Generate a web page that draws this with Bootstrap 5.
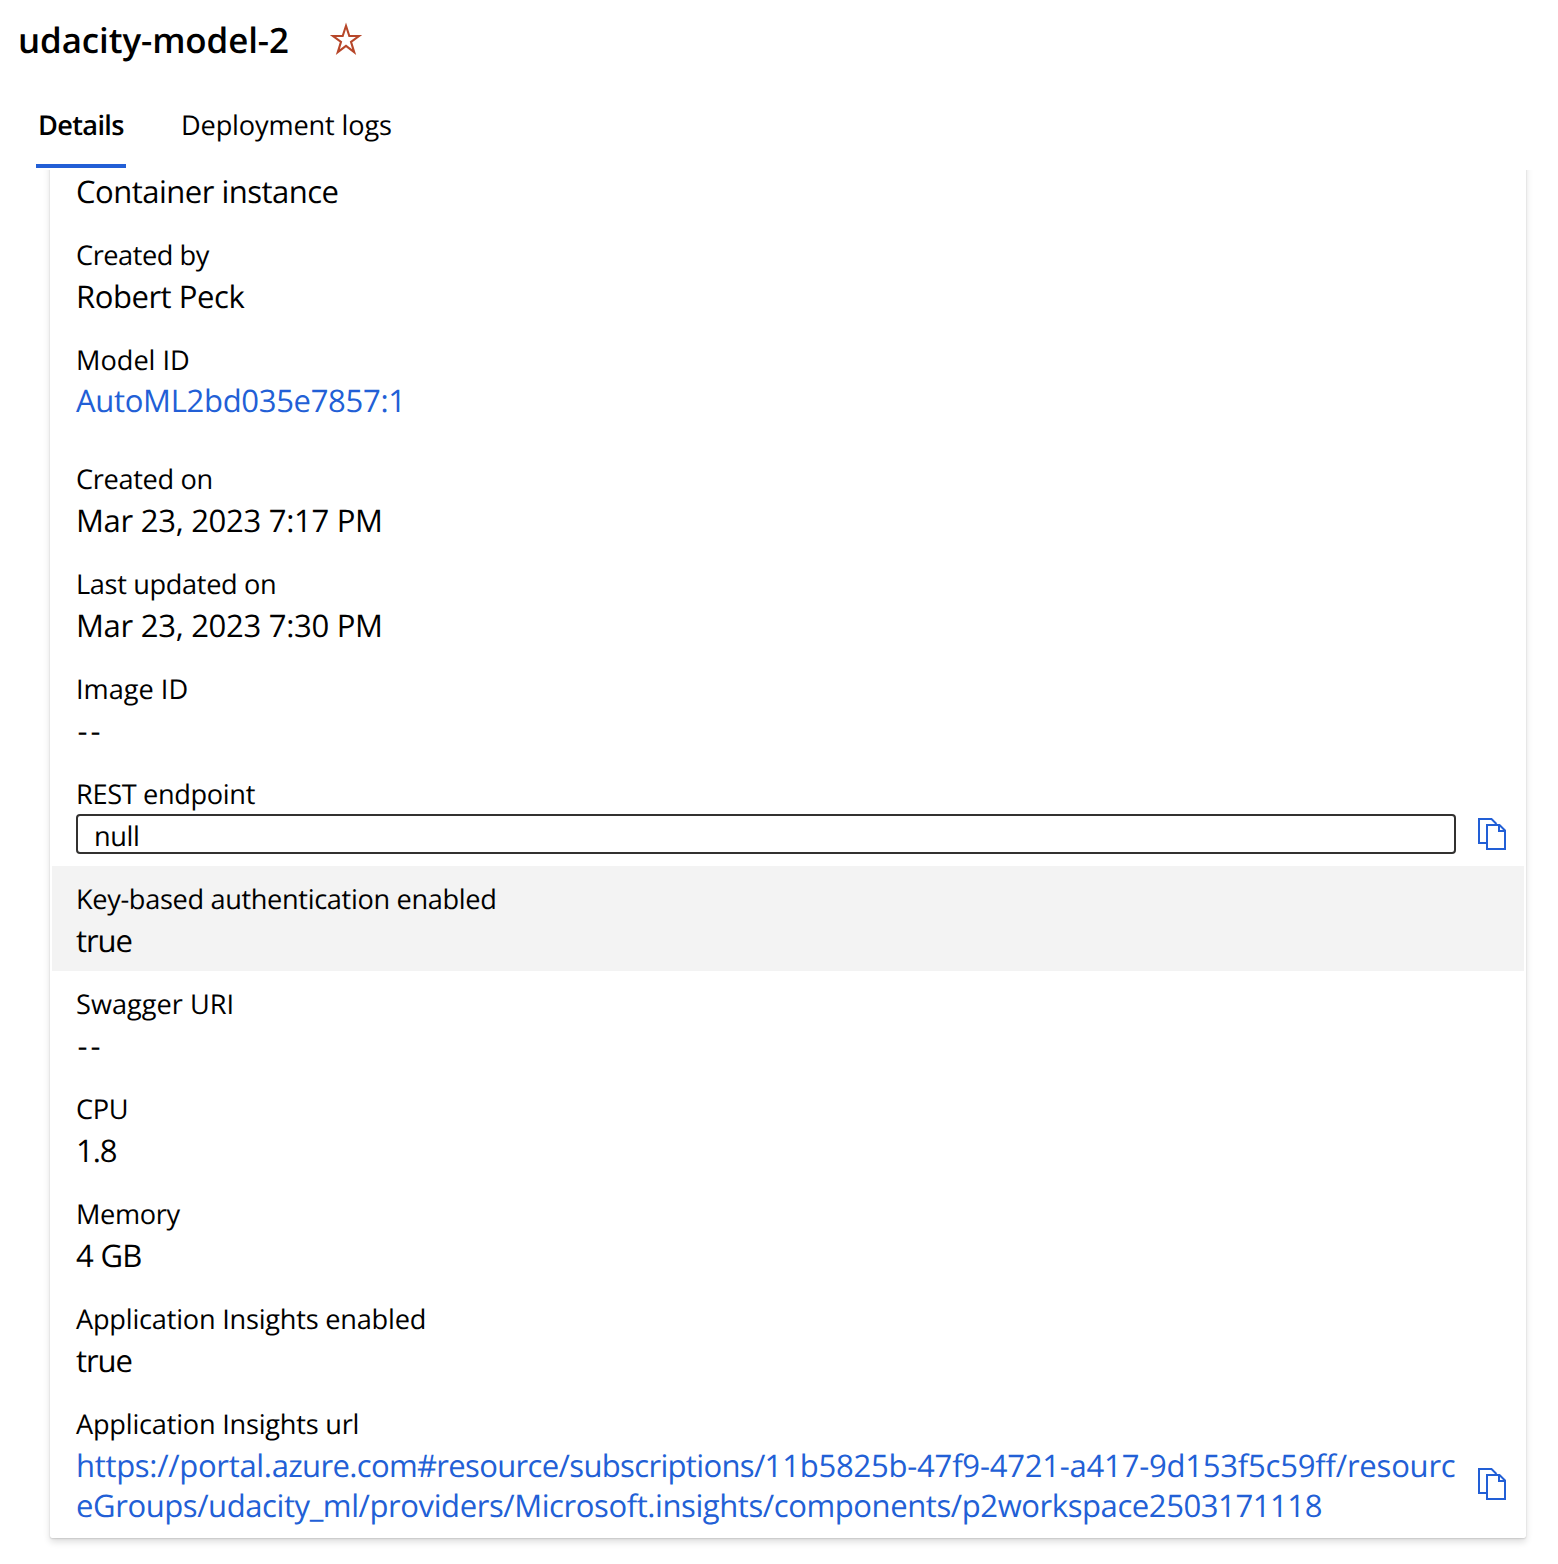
<!DOCTYPE html>
<html lang="en">
<head>
<meta charset="utf-8">
<meta name="viewport" content="width=device-width, initial-scale=1">
<title>udacity-model-2</title>
<link rel="stylesheet" href="https://cdn.jsdelivr.net/npm/bootstrap@5.3.0/dist/css/bootstrap.min.css">
<style>
:root { --accent: #225fd6; }
body { font-family: "Open Sans", "Noto Sans", sans-serif; color: #000; background: #fff; min-height: 1564px; overflow: hidden; text-rendering: geometricPrecision; }
.page-head { height: 84px; padding: 0 0 2px 18px; }
.page-title { font-size: 34.9px; line-height: 48px; font-weight: 600; letter-spacing: -.09px; width: 311px; }
.fav-star { margin-bottom: 5px; }
.tabs { --bs-nav-link-color: #000; --bs-nav-link-hover-color: #000; height: 86px; padding-left: 36px; gap: 53px; }
.tabs .nav-link { height: 84px; padding: 21px 2px 0; font-size: 27.16px; line-height: 40px; border-bottom: 4px solid transparent; letter-spacing: -.15px; }
.tabs .nav-link.active { color: #000; font-weight: 600; letter-spacing: -.65px; border-color: var(--accent); width: 90px; white-space: nowrap; }
.scroll-area { height: 1394px; overflow: hidden; padding: 0 32px 0 50px; }
.detail-card { --bs-card-border-width: 0; --bs-card-border-radius: 0 0 2px 2px; padding: 0 2px 2px; height: 1388px; margin-top: -20px !important; padding-top: 20px; box-shadow: 0 3.2px 7.2px rgba(0,0,0,.132), 0 .6px 1.8px rgba(0,0,0,.108), 0 0 1px rgba(0,0,0,.12); }
.prop { padding: 12px 68px 10px 24px; position: relative; }
.prop-label { font-size: 27.16px; line-height: 41px; letter-spacing: -.34px; font-weight: 400; }
.prop-value { font-size: 31.04px; line-height: 40px; letter-spacing: -.46px; margin: 0; padding-top: 2px; }
.prop-first { padding-top: 0; height: 52px; }
.prop-first .prop-value { line-height: 41px; letter-spacing: -.52px; }
.prop-tall { height: 119px; }
.prop-tall .prop-value { padding-top: 1px; }
.prop-field { padding-bottom: 12px; }
.prop-on { background: #f3f3f3; }
.prop a { color: var(--accent); text-decoration: none; }
.endpoint { height: 40px; border: 2px solid #323130; border-radius: 4px; padding: 0 16px; font-size: 27.16px; line-height: 39px; letter-spacing: -.35px; color: #000; background: #fff; }
.copy-btn { position: absolute; right: 18px; top: 57px; padding: 0; border: 0; line-height: 0; color: var(--accent); }
.copy-low { top: 77px; }
.t-none { letter-spacing: 0; }
.t-date { letter-spacing: -.29px; }
.t-model { letter-spacing: -.32px; }
.t-by { letter-spacing: -.45px; }
.t-app { letter-spacing: -.22px; }
.t-true { letter-spacing: -1.1px; }
.t-dash { letter-spacing: 3px; text-indent: 1.4px; }
.t-num { letter-spacing: -1.1px; }
.t-gb { letter-spacing: -.7px; }
.t-url0 { letter-spacing: -.32px; }
.t-url1 { letter-spacing: -.67px; }
.t-url1b { letter-spacing: -.215px; }
.t-url2 { letter-spacing: -.425px; }
.url-line { white-space: nowrap; }
</style>
</head>
<body>
<header class="page-head d-flex align-items-center">
  <h1 class="page-title m-0">udacity-model-2</h1>
  <svg class="fav-star" width="34" height="34" viewBox="0 0 34 34" fill="none" stroke="#b7472a" stroke-width="2.1" aria-label="Favorite"><path d="M17 3.8 20.3 14H30L22 19.9 25.2 30.1 17 23.8 8.8 30.1 12 19.9 4 14H13.7Z"/></svg>
</header>
<ul class="nav tabs flex-nowrap">
  <li class="nav-item"><a class="nav-link active" href="#">Details</a></li>
  <li class="nav-item"><a class="nav-link" href="#">Deployment logs</a></li>
</ul>
<main class="scroll-area">
  <dl class="card detail-card mx-0 mb-0">
    <div class="prop prop-first"><dd class="prop-value">Container instance</dd></div>
    <div class="prop"><dt class="prop-label t-by">Created by</dt><dd class="prop-value">Robert Peck</dd></div>
    <div class="prop prop-tall"><dt class="prop-label t-none">Model ID</dt><dd class="prop-value t-model"><a href="#">AutoML2bd035e7857:1</a></dd></div>
    <div class="prop"><dt class="prop-label">Created on</dt><dd class="prop-value t-date">Mar 23, 2023 7:17 PM</dd></div>
    <div class="prop"><dt class="prop-label">Last updated on</dt><dd class="prop-value t-date">Mar 23, 2023 7:30 PM</dd></div>
    <div class="prop"><dt class="prop-label t-none">Image ID</dt><dd class="prop-value t-dash">--</dd></div>
    <div class="prop prop-field"><dt class="prop-label">REST endpoint</dt><dd class="endpoint m-0">null</dd>
      <button class="btn copy-btn" type="button" aria-label="Copy"><svg width="28" height="32" viewBox="0 0 28 32" fill="none" stroke="currentColor" stroke-width="2"><path d="M8 25H1V1H13.5L18.5 6"/><path d="M9 7H21.5L27 12.5V31H9Z"/><path d="M21 7V13H27"/></svg></button></div>
    <div class="prop prop-on"><dt class="prop-label">Key-based authentication enabled</dt><dd class="prop-value t-true">true</dd></div>
    <div class="prop"><dt class="prop-label t-none">Swagger URI</dt><dd class="prop-value t-dash">--</dd></div>
    <div class="prop"><dt class="prop-label">CPU</dt><dd class="prop-value t-num">1.8</dd></div>
    <div class="prop"><dt class="prop-label">Memory</dt><dd class="prop-value t-gb">4 GB</dd></div>
    <div class="prop"><dt class="prop-label t-app">Application Insights enabled</dt><dd class="prop-value t-true">true</dd></div>
    <div class="prop"><dt class="prop-label t-app">Application Insights url</dt><dd class="prop-value url-line"><a href="#"><span class="t-url0">https://portal.</span><span class="t-url1">azure.com#resource/subscriptions/</span><span class="t-url1b">11b5825b-47f9-4721-a417-9d153f5c59ff/resourc</span><br><span class="t-url2">eGroups/udacity_ml/providers/Microsoft.insights/components/p2workspace2503171118</span></a></dd>
      <button class="btn copy-btn copy-low" type="button" aria-label="Copy"><svg width="28" height="32" viewBox="0 0 28 32" fill="none" stroke="currentColor" stroke-width="2"><path d="M8 25H1V1H13.5L18.5 6"/><path d="M9 7H21.5L27 12.5V31H9Z"/><path d="M21 7V13H27"/></svg></button></div>
  </dl>
</main>
<script src="https://cdn.jsdelivr.net/npm/bootstrap@5.3.0/dist/js/bootstrap.bundle.min.js"></script>
</body>
</html>
